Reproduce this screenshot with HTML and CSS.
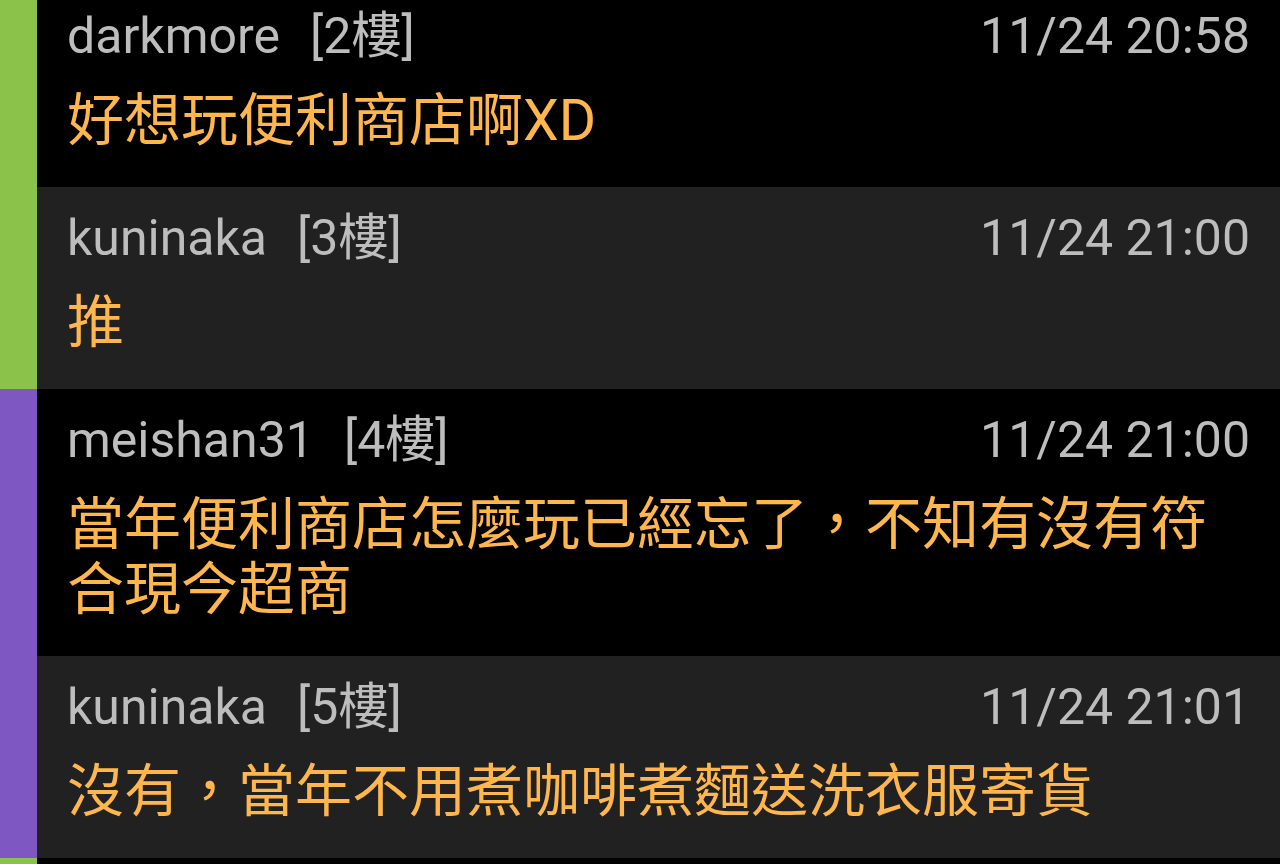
FILE: index.html
```html
<!DOCTYPE html>
<html lang="zh-Hant">
<head>
    <meta charset="UTF-8">
    <meta name="viewport" content="width=device-width, initial-scale=1.0">
    <title>回覆列表</title>
    <link rel="stylesheet" href="styles.css">
</head>
<body>
    <div class="reply-list">
        <div class="reply reply-dark bar-green">
            <div class="reply-head">
                <span class="reply-user">darkmore<span class="reply-floor">[2樓]</span></span>
                <span class="reply-time">11/24 20:58</span>
            </div>
            <div class="reply-text">好想玩便利商店啊XD</div>
        </div>

        <div class="reply reply-gray bar-green">
            <div class="reply-head">
                <span class="reply-user">kuninaka<span class="reply-floor">[3樓]</span></span>
                <span class="reply-time">11/24 21:00</span>
            </div>
            <div class="reply-text">推</div>
        </div>

        <div class="reply reply-dark bar-purple">
            <div class="reply-head">
                <span class="reply-user">meishan31<span class="reply-floor">[4樓]</span></span>
                <span class="reply-time">11/24 21:00</span>
            </div>
            <div class="reply-text">當年便利商店怎麼玩已經忘了，不知有沒有符合現今超商</div>
        </div>

        <div class="reply reply-gray bar-purple">
            <div class="reply-head">
                <span class="reply-user">kuninaka<span class="reply-floor">[5樓]</span></span>
                <span class="reply-time">11/24 21:01</span>
            </div>
            <div class="reply-text">沒有，當年不用煮咖啡煮麵送洗衣服寄貨</div>
        </div>

        <!-- la suivante commence juste au bord de l'écran -->
        <div class="reply reply-dark bar-green reply-next"></div>
    </div>
</body>
</html>
```

FILE: styles.css
```css
* {
    box-sizing: border-box;
    font-family: Roboto, "Noto Sans CJK TC", sans-serif;
}

body {
    margin: 0;
    background-color: #000;
    height: 864px;
    overflow: hidden;
}

/* la liste est un peu défilée vers le haut */
.reply-list {
    margin-top: -15px;
}

.reply {
    border-left: 37px solid #8bc34a;
    padding: 21px 30px 34px 30px;
}

.reply-dark {
    background-color: #000;
}

.reply-gray {
    background-color: #212121;
}

.bar-green {
    border-left-color: #8bc34a;
}

.bar-purple {
    border-left-color: #7e57c2;
}

.reply-next {
    height: 202px;
}

.reply-head {
    display: flex;
    justify-content: space-between;
    font-size: 50px;
    line-height: 60px;
    color: #bdbdbd;
}

.reply-floor {
    margin-left: 30px;
}

.reply-text {
    margin-top: 22px;
    font-size: 57px;
    line-height: 65px;
    color: #ffb74d;
}
```
